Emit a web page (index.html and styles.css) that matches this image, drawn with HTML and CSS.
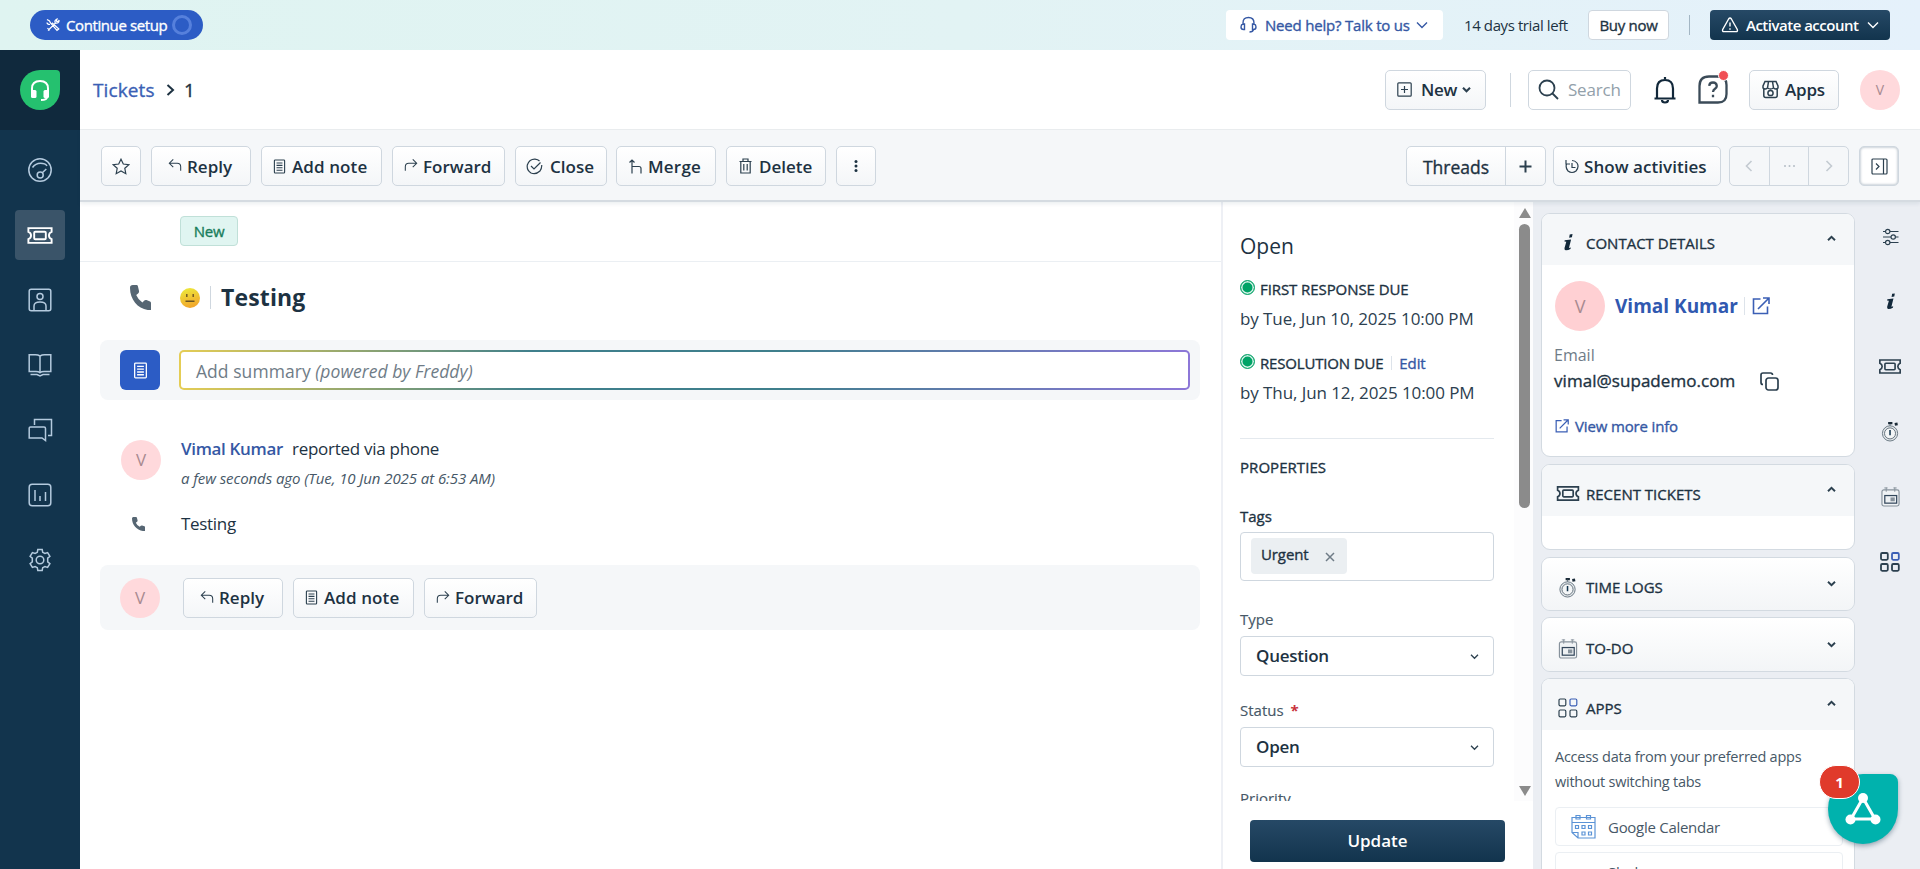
FILE: index.html
```html
<!DOCTYPE html>
<html lang="en">
<head>
<meta charset="utf-8">
<title>Ticket 1</title>
<link rel="stylesheet" href="styles.css">
</head>
<body>
<svg class="sprite" width="0" height="0">
  <symbol id="reply" viewBox="0 0 16 16"><path d="M6 1.500 1.500 6 6 10.500M1.500 6H10.500Q14.500 6 14.500 10V14.500"/></symbol>
  <symbol id="forward" viewBox="0 0 16 16"><path d="M10 1.500 14.500 6 10 10.500M14.500 6H5.500Q1.500 6 1.500 10V14.500"/></symbol>
  <symbol id="note" viewBox="0 0 14 16"><rect x="1.500" y="1" width="11" height="14" rx="0.800"/><path d="M3.800 4.200H10.200M3.800 6.800H10.200M3.800 9.400H10.200M3.800 12H10.200"/></symbol>
  <symbol id="phone" viewBox="0 0 22 26"><path d="M0 3C0 1 1 0 3 0H7Q8 0 8.300 1.200L9.500 6.500Q9.600 8 8.500 8.700L6.500 10.500Q8.500 15.500 13 18.300L15 16.200Q16 15.300 17.200 15.700L21 17.200Q22 17.600 22 18.800V26H18.500C8 24.500 0 15 0 3Z"/></symbol>
  <symbol id="ticket" viewBox="0 0 26 18"><path d="M2 2H24V5.500Q21.500 6.500 21.500 9T24 12.500V16H2V12.500Q4.500 11.500 4.500 9T2 5.500Z"/><rect x="7.500" y="5.500" width="11" height="7" rx="1"/></symbol>
  <symbol id="up" viewBox="0 0 10 8"><path d="M1 6 5 2 9 6"/></symbol>
  <symbol id="down" viewBox="0 0 10 8"><path d="M1 2 5 6 9 2"/></symbol>
  <symbol id="watch" viewBox="0 0 20 22"><circle cx="9.500" cy="13" r="8" fill="#e3e7ea" stroke="#687782" stroke-width="1"/><circle cx="9.500" cy="13" r="5.800" fill="#f4f6f7" stroke="#55636f" stroke-width=".9"/><path d="M9.500 9.500V15" stroke="#12344d" stroke-width="1.600"/><path d="M7.500 2.200H12" stroke="#1b2b38" stroke-width="2.400"/><path d="M14.500 3.500 17.500 3" stroke="#1b2b38" stroke-width="3"/><path d="M9.500 3V5" stroke="#687782"/></symbol>
  <symbol id="cal" viewBox="0 0 20 22"><rect x="1" y="4" width="18" height="17" rx="2" fill="#f0f3f5" stroke="#87929c"/><path d="M5.500 1.500V6M14.500 1.500V6M3.500 2H7M13 2H16.500" stroke="#87929c" stroke-width="1"/><rect x="4" y="10" width="12.500" height="8" fill="#eef1f3" stroke="#33475b" stroke-width="1.300"/><rect x="10" y="12" width="4.500" height="4" fill="#87929c" stroke="none"/></symbol>
  <symbol id="grid" viewBox="0 0 20 20"><rect x="1" y="1" width="6.800" height="6.800" rx="1.200"/><rect x="12" y="1" width="6.800" height="6.800" rx="1.200" stroke="#3b5fb5"/><rect x="1" y="12" width="6.800" height="6.800" rx="1.200"/><rect x="12" y="12" width="6.800" height="6.800" rx="1.200"/></symbol>
  <symbol id="ext" viewBox="0 0 18 18"><path d="M8.500 2H1.500V16.500H15.500V9.500M11 1H17V7M17 1 6 12"/></symbol>
  <symbol id="info" viewBox="0 0 10 18"><path d="M6.800 0.500 9.800 0 9.200 3.400 6.200 3.900ZM1.500 6.500 8.300 5.800 6 14.700 8 14.200 7.600 16Q5 17.500 2.500 17.300.8 16.800 1.300 14.800L3.200 8.200 1.200 8Z"/></symbol>
</svg>

<header class="trial">
  <div class="setup">
    <svg width="14" height="14" viewBox="0 0 14 14"><path d="M2 12.500 9.500 5M9.300 5Q8 2.500 11 1L10.500 3.300 12.500 3.500 13 2Q13.500 5.500 9.500 5M1 1.500 3.500 3 4.500 5 11 12.500 12.800 11 6 4.700M1 4.500Q1 6.500 4 6.500M1.500 10 3.500 12.500"/></svg>
    <span class="t-setup">Continue setup</span><i class="ring"></i>
  </div>
  <div class="help">
    <svg width="17" height="18" viewBox="0 0 17 18"><path d="M3 9V7Q3 1.500 8.500 1.500T14 7V9M3 8Q1 8.500 1 11T3.500 13.500H4.500V8ZM14 8Q16 8.500 16 11T13.500 13.500H12.500V8ZM13.500 13.500Q13 16 9.500 16"/></svg>
    <span class="t-help">Need help? Talk to us</span>
    <svg class="chev" width="12" height="8" viewBox="0 0 12 8"><path d="M1 1.500 6 6.500 11 1.500"/></svg>
  </div>
  <span class="left t-trial">14 days trial left</span>
  <div class="buy"><span class="t-buy">Buy now</span></div>
  <i class="vline"></i>
  <div class="activate">
    <svg width="18" height="16" viewBox="0 0 18 16"><path d="M7.600 2Q9 0 10.400 2L16.300 12.500Q17 14.600 15 14.600H3Q1 14.600 1.700 12.500ZM9 5.500V9.500M9 11.200V12.700"/></svg>
    <span class="t-act">Activate account</span>
    <svg class="chev" width="12" height="8" viewBox="0 0 12 8"><path d="M1 1.500 6 6.500 11 1.500"/></svg>
  </div>
</header>

<div class="shell">
  <nav class="side">
    <div class="logo-box"><div class="logo"><svg class="headset" width="20" height="24" viewBox="0 0 20 24"><path d="M2 14V10.500Q2 3 10 3T18 10.500V14M17 19Q17 22 11 22" fill="none" stroke="#fff" stroke-width="2"/><rect x="1" y="12" width="5.500" height="8" rx="1.500" fill="#fff"/><rect x="13.500" y="12" width="5.500" height="8" rx="1.500" fill="#fff"/></svg></div></div>
    <div class="nav-item"><svg width="26" height="26" viewBox="0 0 26 26"><circle cx="13" cy="13" r="11.200"/><path d="M5.500 10.500Q8.500 6.300 13.500 6.300T20 9M15.300 15.800 19.300 12"/><circle cx="13.200" cy="18" r="3"/></svg></div>
    <div class="nav-item on"><svg width="28" height="19"><use href="#ticket"/></svg></div>
    <div class="nav-item"><svg width="24" height="24" viewBox="0 0 24 24"><rect x="1.200" y="1.200" width="21.600" height="21.600" rx="2"/><circle cx="12" cy="8.500" r="3"/><path d="M6 22.500V18Q6 14 12 14T18 18V22.500"/></svg></div>
    <div class="nav-item"><svg width="24" height="24" viewBox="0 0 24 24"><path d="M12 3Q10 1.800 7.500 1.800H1.200V18.500H8Q10.500 18.500 12 19.800 13.500 18.500 16 18.500H22.800V1.800H16.500Q14 1.800 12 3V19.500M2.500 21.500H9L12 23 15 21.500H21.500"/></svg></div>
    <div class="nav-item"><svg width="25" height="24" viewBox="0 0 25 24"><path d="M6.500 7V1.500H23.500V17.500H20M1.200 10Q1.200 9 2.500 9H16Q17.500 9 17.500 10.500V22.500L14 20H1.200Z"/></svg></div>
    <div class="nav-item"><svg width="24" height="24" viewBox="0 0 24 24"><rect x="1.200" y="1.200" width="21.600" height="21.600" rx="3"/><path d="M7 7V18M12 13V18M17.500 9V18"/></svg></div>
    <div class="nav-item"><svg width="24" height="24" viewBox="0 0 24 24"><path d="M9.300 4.300 9.800 1.500H14.200L14.700 4.300 16.900 5.500 19.600 4.600 21.900 8.400 19.700 10.200V13.800L21.900 15.600 19.600 19.400 16.900 18.500 14.700 19.700 14.200 22.500H9.800L9.300 19.700 7.100 18.500 4.400 19.400 2.100 15.600 4.300 13.800V10.200L2.100 8.400 4.400 4.600 7.100 5.500Z"/><circle cx="12" cy="12" r="3.800"/></svg></div>
  </nav>

  <div class="body">
    <div class="head">
      <span class="crumb t-crumb">Tickets</span>
      <svg class="sep" width="9" height="12" viewBox="0 0 9 12"><path d="M1.500 1 7 6 1.500 11"/></svg>
      <span class="num">1</span>
      <div class="btn new"><svg width="15" height="15" viewBox="0 0 15 15"><rect x=".8" y=".8" width="13.400" height="13.400" rx="1"/><path d="M4 7.500H11M7.500 4V11"/></svg><span class="t-new">New</span><svg class="bold" width="9" height="7"><use href="#down"/></svg></div>
      <i class="vline2"></i>
      <div class="search"><svg width="21" height="21" viewBox="0 0 21 21"><circle cx="9" cy="9" r="7.500"/><path d="M14.500 14.500 20 20"/></svg><span class="t-search">Search</span></div>
      <svg class="bell" width="24" height="28" viewBox="0 0 24 28"><path d="M12 1V3M1.500 22.500H22.500M4 22V12.500Q4 4 12 4T20 12.500V22M9 24Q9 26.500 12 26.500T15 24"/></svg>
      <div class="ask"><svg width="30" height="29" viewBox="0 0 30 29"><path d="M19 1.500H11Q1.500 1.500 1.500 11V27.500H20Q28.500 27.500 28.500 19V10Q28.500 1.500 19 1.500Z"/><path d="M11.200 10.800Q11.500 7.500 15 7.500T18.800 11Q18.800 12.500 17 13.700T15 17M15 19.800V22.300"/></svg><b class="dot"></b></div>
      <div class="btn apps"><svg width="17" height="19" viewBox="0 0 17 19"><path d="M3 1.500H14L16 6V8Q14 10 11.500 8 8.500 10 5.500 8 3 10 1 8V6ZM5.500 8 6.500 1.500M11.500 8 10.500 1.500M1.800 9V15.500Q1.800 17.500 3.800 17.500H13.200Q15.200 17.500 15.200 15.500V9"/><circle cx="8.500" cy="13" r="2.600"/></svg><span class="t-apps">Apps</span></div>
      <div class="avatar a40 me">V</div>
    </div>

    <div class="tools">
      <div class="btn w40"><svg width="18" height="17" viewBox="0 0 18 17"><path d="M9 1.200 11.300 6 16.800 6.700 12.800 10.300 13.800 15.700 9 13 4.200 15.700 5.200 10.300 1.200 6.700 6.700 6Z"/></svg></div>
      <div class="btn b-reply"><svg width="14" height="14"><use href="#reply"/></svg><span class="t-reply">Reply</span></div>
      <div class="btn b-note"><svg width="13" height="15"><use href="#note"/></svg><span class="t-note">Add note</span></div>
      <div class="btn b-fwd"><svg width="14" height="14"><use href="#forward"/></svg><span class="t-fwd">Forward</span></div>
      <div class="btn b-close"><svg width="17" height="17" viewBox="0 0 17 17"><path d="M15.700 7Q16 10 14 13 10 16.800 5 15 .5 12 1.300 7 3.500 1 9 1.200 12 1.500 13.500 3M5 8 8 11 14.500 4.500"/></svg><span class="t-close">Close</span></div>
      <div class="btn b-merge"><svg width="13" height="15" viewBox="0 0 13 15"><path d="M3 14.500V1M.5 3.500 3 1 5.500 3.500M3 7.500H10Q12 7.500 12 9.500V14.500"/></svg><span class="t-merge">Merge</span></div>
      <div class="btn b-del"><svg width="13" height="16" viewBox="0 0 13 16"><path d="M.5 3.500H12.500M4 3.500V1H9V3.500M1.800 3.500V15H11.200V3.500M4.800 6V12.500M8.200 6V12.500"/></svg><span class="t-del">Delete</span></div>
      <div class="btn w40"><svg width="4" height="14" viewBox="0 0 4 14" class="dots"><circle cx="2" cy="2.500" r="1.500"/><circle cx="2" cy="7" r="1.500"/><circle cx="2" cy="11.500" r="1.500"/></svg></div>
      <div class="btn-group threads"><div class="seg s-th"><span class="t-th">Threads</span></div><div class="seg s-plus"><svg width="13" height="13" viewBox="0 0 13 13"><path d="M6.500.5V12.500M.5 6.500H12.500"/></svg></div></div>
      <div class="btn b-act"><svg width="14" height="15" viewBox="0 0 14 15"><path d="M1 1V5H5M1.500 5Q.3 9 3 12 7 15 11 12 14.500 8 12 4"/><path d="M7 4V8.500H10.500M7 1.500Q10 1.500 12 4"/></svg><span class="t-sh">Show activities</span></div>
      <div class="btn-group pager"><div class="seg"><svg width="8" height="12" viewBox="0 0 8 12"><path d="M6.500 1 1.500 6 6.500 11"/></svg></div><div class="seg"><svg width="13" height="4" viewBox="0 0 13 4" class="pdots"><circle cx="2" cy="2" r="1"/><circle cx="6.500" cy="2" r="1"/><circle cx="11" cy="2" r="1"/></svg></div><div class="seg"><svg width="8" height="12" viewBox="0 0 8 12"><path d="M1.500 1 6.500 6 1.500 11"/></svg></div></div>
      <div class="btn w40 toggle"><svg width="17" height="17" viewBox="0 0 17 17"><rect x="1" y="1" width="15" height="15" rx="1"/><path d="M12.500 1V16M5 5.500 8 8.500 5 11.500"/></svg></div>
    </div>

    <div class="content">
      <main class="convo">
        <div class="status-row"><span class="badge"><span class="t-badge">New</span></span></div>
        <div class="subject">
          <svg class="ph" width="21" height="25"><use href="#phone"/></svg>
          <svg class="face" width="20" height="20" viewBox="0 0 20 20"><defs><linearGradient id="fg" x1="0" y1="0" x2=".3" y2="1"><stop offset="0" stop-color="#ecee3c"/><stop offset="1" stop-color="#f2a92c"/></linearGradient></defs><circle cx="10" cy="10" r="10" fill="url(#fg)"/><path d="M6.800 6V9M13.200 6V9M5.500 13.200H14.500" stroke="#6b5323" stroke-width="1.400"/></svg>
          <i class="vline3"></i>
          <h1 class="t-title">Testing</h1>
        </div>
        <div class="summary">
          <div class="sum-btn"><svg width="15" height="17"><use href="#note"/></svg></div>
          <div class="sum-input"><span class="t-sum">Add summary <em>(powered by Freddy)</em></span></div>
        </div>
        <div class="event">
          <div class="avatar a40">V</div>
          <div class="event-text">
            <div class="line1"><b class="t-vk">Vimal Kumar</b><span class="t-rep">reported via phone</span></div>
            <em class="t-ago">a few seconds ago (Tue, 10 Jun 2025 at 6:53 AM)</em>
          </div>
        </div>
        <div class="msg"><svg class="ph" width="13" height="14" viewBox="0 0 22 26" preserveAspectRatio="none"><use href="#phone" width="22" height="26"/></svg><span class="t-msg">Testing</span></div>
        <div class="respond">
          <div class="avatar a40">V</div>
          <div class="btn b-reply"><svg width="14" height="14"><use href="#reply"/></svg><span class="t-reply">Reply</span></div>
          <div class="btn b-note"><svg width="13" height="15"><use href="#note"/></svg><span class="t-note">Add note</span></div>
          <div class="btn b-fwd"><svg width="14" height="14"><use href="#forward"/></svg><span class="t-fwd">Forward</span></div>
        </div>
      </main>

      <aside class="props">
        <div class="scroll">
          <div class="fields">
            <div class="state"><span class="t-open">Open</span></div>
            <div class="due"><i class="green"></i><span class="t-frd">FIRST RESPONSE DUE</span></div>
            <div class="by"><span class="t-by1">by Tue, Jun 10, 2025 10:00 PM</span></div>
            <div class="due second"><i class="green"></i><span class="t-rd">RESOLUTION DUE</span><i class="vline4"></i><span class="edit t-edit">Edit</span></div>
            <div class="by by2"><span class="t-by2">by Thu, Jun 12, 2025 10:00 PM</span></div>
            <div class="ptitle"><span class="t-props">PROPERTIES</span></div>
            <label class="lab dark"><span class="t-tags">Tags</span></label>
            <div class="tagbox"><div class="chip"><span class="t-urg">Urgent</span><svg width="10" height="10" viewBox="0 0 10 10"><path d="M1 1 9 9M9 1 1 9"/></svg></div></div>
            <label class="lab l2"><span class="t-type">Type</span></label>
            <div class="select"><span class="t-q">Question</span><svg width="9" height="7"><use href="#down"/></svg></div>
            <label class="lab l3"><span class="t-stat">Status</span><b class="req">*</b></label>
            <div class="select"><span class="t-o">Open</span><svg width="9" height="7"><use href="#down"/></svg></div>
            <label class="lab l4"><span class="t-pri">Priority</span></label>
          </div>
          <div class="bar"><i class="arr-up"></i><i class="thumb"></i><i class="arr-down"></i></div>
        </div>
        <div class="update"><span class="t-upd">Update</span></div>
      </aside>

      <aside class="widgets">
        <div class="cards">
          <section class="card contact">
            <div class="chead"><svg class="solid" width="9" height="17"><use href="#info"/></svg><span class="t-cd">CONTACT DETAILS</span><svg class="cv" width="9" height="7"><use href="#up"/></svg></div>
            <div class="person"><div class="avatar a50">V</div><b class="t-name">Vimal Kumar</b><i class="vline5"></i><svg width="18" height="18"><use href="#ext"/></svg></div>
            <div class="elabel"><span class="t-el">Email</span></div>
            <div class="email"><span class="t-em">vimal@supademo.com</span><svg width="19" height="19" viewBox="0 0 19 19"><rect x="6" y="6" width="12" height="12" rx="2.500"/><path d="M3 12.500Q1 12.500 1 10.500V3Q1 1 3 1H10.500Q12.500 1 12.500 3"/></svg></div>
            <div class="more"><svg width="14" height="14"><use href="#ext"/></svg><span class="t-more">View more info</span></div>
          </section>
          <section class="card recent"><div class="chead"><svg class="wide" width="24" height="17"><use href="#ticket"/></svg><span class="t-rt">RECENT TICKETS</span><svg class="cv" width="9" height="7"><use href="#up"/></svg></div></section>
          <section class="card folded tl"><div class="chead"><svg width="19" height="21"><use href="#watch"/></svg><span class="t-tl">TIME LOGS</span><svg class="cv" width="9" height="7"><use href="#down"/></svg></div></section>
          <section class="card folded td"><div class="chead"><svg width="19" height="21"><use href="#cal"/></svg><span class="t-td">TO-DO</span><svg class="cv" width="9" height="7"><use href="#down"/></svg></div></section>
          <section class="card appcard">
            <div class="chead"><svg width="20" height="20"><use href="#grid"/></svg><span class="t-ap">APPS</span><svg class="cv" width="9" height="7"><use href="#up"/></svg></div>
            <p class="desc"><span class="t-d1">Access data from your preferred apps</span><br><span class="t-d2">without switching tabs</span></p>
            <div class="app"><svg width="25" height="25" viewBox="0 0 25 25"><path d="M1 3.500H24V24H7L1 18.500ZM1 8.500H24M1 18.500H7V24"/><path d="M5 1.500H9V5H5ZM15.500 1.500H19.500V5H15.500ZM4.500 11.500H7.500V14.500H4.500ZM11 11.500H14V14.500H11ZM17.500 11.500H20.500V14.500H17.500ZM11 18H14V21H11ZM17.500 18H20.500V21H17.500Z"/></svg><span class="t-g">Google Calendar</span></div>
            <div class="app slack"><span class="t-s">Slack</span></div>
          </section>
        </div>
        <div class="rail">
          <div><svg width="17" height="18" viewBox="0 0 17 18"><path d="M1 3.500H3.500M8 3.500H16.500M1 9H9M13.500 9H16.500M1 14.500H3.500M8 14.500H16.500"/><circle cx="5.700" cy="3.500" r="2.200"/><circle cx="11.200" cy="9" r="2.200"/><circle cx="5.700" cy="14.500" r="2.200"/></svg></div>
          <div><svg class="solid" width="9" height="17"><use href="#info"/></svg></div>
          <div><svg class="heavy" width="24" height="17"><use href="#ticket"/></svg></div>
          <div><svg width="19" height="21"><use href="#watch"/></svg></div>
          <div><svg width="19" height="21"><use href="#cal"/></svg></div>
          <div><svg class="heavy" width="20" height="20"><use href="#grid"/></svg></div>
        </div>
      </aside>
    </div>
  </div>
</div>

<div class="float"><svg class="nodes" width="36" height="34" viewBox="0 0 36 34"><path d="M18 6 6 27H30Z" fill="none" stroke="#fff" stroke-width="3"/><circle cx="18" cy="6" r="5" fill="#fff"/><circle cx="5.500" cy="27.500" r="5" fill="#fff"/><circle cx="30.500" cy="27.500" r="5" fill="#fff"/></svg><b class="count">1</b></div>
</body>
</html>
```
FILE: styles.css
```css
* { box-sizing: border-box; }
body { margin: 0; height: 869px; overflow: hidden; background: #fff; font: 17px/24px "Open Sans", "Noto Sans", sans-serif; color: #1d3242; position: relative; }
svg { display: block; flex: none; fill: none; stroke: #2c404f; stroke-width: 1.2; }
.sprite { position: absolute; }
span, b, em { white-space: nowrap; }
i { display: block; flex: none; }

/* medium weight, between regular and semibold */
.t-setup, .t-help, .t-buy, .t-crumb, .num, .t-badge, .t-th, .t-frd, .t-rd, .t-edit, .t-props, .t-tags, .t-urg, .t-em, .t-more, .chead span { -webkit-text-stroke: .35px currentColor; }
.t-type, .t-stat, .t-pri { -webkit-text-stroke: .15px currentColor; }

.trial { height: 50px; display: flex; align-items: center; background: linear-gradient(90deg, #dff4f1 0%, #e2f3f4 50%, #e5f1fb 100%); padding: 0 30px; font-size: 15px; }
.setup { width: 173px; height: 30px; border-radius: 15px; background: #2c5cc5; color: #fff; display: flex; align-items: center; padding-left: 16px; }
.setup svg { stroke: #fff; }
.setup .t-setup { width: 106px; margin-left: 6px; letter-spacing: -.4px; }
.ring { width: 20px; height: 20px; border: 3px solid #5680dc; border-radius: 50%; }
.help { margin-left: auto; width: 217px; height: 30px; border-radius: 4px; background: #fff; display: flex; align-items: center; padding-left: 14px; color: #3558a4; }
.help svg { stroke: #3558a4; stroke-width: 1.4; }
.help .t-help { margin-left: 8px; width: 151px; letter-spacing: -.2px; }
.left { margin-left: 21px; width: 124px; letter-spacing: -.4px; }
.buy { width: 81px; height: 30px; border: 1px solid #cfd7df; border-radius: 4px; background: #fff; display: flex; align-items: center; justify-content: center; letter-spacing: -.3px; }
.vline { width: 1px; height: 20px; background: #a3b6c4; margin: 0 20px; }
.activate { width: 180px; height: 30px; border-radius: 4px; background: linear-gradient(#264966, #12344d); color: #fff; display: flex; align-items: center; padding-left: 11px; font-weight: 600; }
.activate svg { stroke: #fff; stroke-width: 1.4; }
.t-act { margin-left: 7px; width: 121px; letter-spacing: -.5px; }

.shell { display: flex; height: 819px; }
.side { width: 80px; background: #12344d; flex: none; }
.logo-box { height: 80px; background: #10293d; display: grid; place-items: center; margin-bottom: 15px; }
.logo { width: 40px; height: 40px; background: #25c16f; border-radius: 50% 4px 50% 50%; display: grid; place-items: center; }
.headset, .nodes { stroke: none; }
.nav-item { width: 50px; height: 50px; margin: 0 auto 15px 15px; border-radius: 4px; display: grid; place-items: center; }
.nav-item svg { stroke: #b4cade; stroke-width: 1.5; }
.nav-item.on { background: #3a5469; }
.nav-item.on svg { stroke: #fff; stroke-width: 1.8; }

.body { flex: 1; min-width: 0; }
.head { height: 80px; display: flex; align-items: center; padding: 0 20px 0 13px; font-size: 19px; border-bottom: 1px solid #ebeef0; }
.crumb { color: #3b5fb5; width: 62px; }
.t-crumb { letter-spacing: .1px; padding-top: 1px; }
.sep { margin: 1px 0 0 11px; stroke: #1d3242; stroke-width: 2; }
.num { margin-left: 9px; padding-top: 1px; }
.btn { height: 40px; border: 1px solid #cfd7df; border-radius: 5px; background: linear-gradient(#fff, #f4f6f8); display: flex; align-items: center; font-weight: 600; flex: none; font-size: 17px; }
.new { margin-left: auto; width: 101px; padding-left: 11px; }
.t-new { margin-left: 9px; width: 37px; margin-right: 4px; letter-spacing: -.3px; }
.bold { stroke-width: 2.4; }
.vline2 { width: 1px; height: 34px; background: #cfd7df; margin: 0 17px 0 24px; }
.search { width: 103px; height: 40px; border: 1px solid #cfd7df; border-radius: 5px; display: flex; align-items: center; padding-left: 9px; color: #92a0aa; font-size: 17px; }
.search svg { stroke-width: 1.8; }
.t-search { margin-left: 9px; letter-spacing: -.2px; }
.bell { margin-left: 22px; stroke-width: 2.2; stroke: #12283a; }
.ask { margin-left: 21px; position: relative; }
.ask svg { stroke-width: 2.3; stroke: #3b4b58; }
.dot { position: absolute; right: -1px; top: -5px; width: 11px; height: 11px; border: 1px solid #fff; border-radius: 50%; background: #f04f55; }
.apps { margin-left: 21px; width: 90px; padding-left: 12px; }
.apps svg { stroke-width: 1.5; }
.t-apps { margin-left: 6px; letter-spacing: -.2px; }
.avatar { border-radius: 50%; background: #ffd9dc; color: #a88a90; display: grid; place-items: center; flex: none; font-size: 17px; }
.a40 { width: 40px; height: 40px; }
.a50 { width: 50px; height: 50px; background: #ffd0d3; font-size: 18px; }
.me { margin-left: 21px; font-size: 14px; }

.tools { height: 72px; background: #f5f7f9; border-bottom: 2px solid #d5dbe1; display: flex; align-items: center; padding: 2px 21px 0; position: relative; box-shadow: 0 2px 4px rgba(18, 52, 77, .08); }
.tools span, .respond span { padding-top: 1px; }
.w40 { width: 40px; justify-content: center; }
.tools > .btn + .btn { margin-left: 10px; }
.tools > .btn + .b-merge { margin-left: 9px; }
.tools > .btn + .btn.toggle, .tools > .toggle { margin-left: 10px; background: #fff; box-shadow: 0 0 3px #9aa8b5 inset; }
.b-reply { width: 100px; padding-left: 16px; }
.b-reply svg, .b-fwd svg { position: relative; top: -1px; }
.t-reply { margin-left: 5px; }
.b-note { width: 121px; padding-left: 11px; }
.t-note { margin-left: 6px; letter-spacing: .1px; }
.b-fwd { width: 113px; padding-left: 11px; }
.t-fwd { margin-left: 5px; }
.b-close { width: 92px; padding-left: 10px; }
.t-close { margin-left: 7px; }
.b-merge { width: 100px; padding-left: 12px; }
.t-merge { margin-left: 6px; letter-spacing: .2px; }
.b-del { width: 100px; padding-left: 12px; }
.t-del { margin-left: 7px; }
.dots, .pdots { fill: #1d3242; stroke: none; }
.btn-group { display: flex; height: 40px; border: 1px solid #cfd7df; border-radius: 5px; background: linear-gradient(#fff, #f4f6f8); }
.threads { margin-left: auto; width: 140px; }
.seg { display: grid; place-items: center; border-left: 1px solid #cfd7df; }
.seg:first-child { border-left: 0; }
.s-th { width: 98px; font-size: 17.500px; }
.s-plus { flex: 1; }
.s-plus svg { stroke-width: 2; }
.b-act { margin-left: 7px; width: 168px; padding-left: 11px; }
.t-sh { margin-left: 5px; letter-spacing: .05px; }
.pager { margin-left: 8px; width: 120px; background: #f5f7f9; }
.pager .seg { flex: 1; }
.pager svg { stroke: #c3cad1; stroke-width: 1.6; }
.pager .pdots { fill: #b5bec6; stroke: none; }

.content { display: flex; height: 667px; }
.convo { width: 1141px; flex: none; }
.status-row { height: 60px; border-bottom: 1px solid #ebeff3; padding: 14px 0 0 100px; }
.badge { display: grid; place-items: center; width: 58px; height: 30px; border: 1px solid #c0e0d8; border-radius: 4px; background: #e0f5f1; color: #187d5b; font-size: 15px; letter-spacing: -.2px; }
.subject { height: 78px; display: flex; align-items: center; padding: 0 0 8px 50px; }
.ph { fill: #566673; stroke: none; }
.face { stroke: none; margin: 2px 0 0 29px; }
.vline3 { width: 1px; height: 23px; background: #cfd7df; margin: 0 10px 0 10px; }
h1 { margin: 0; font-size: 23px; line-height: 30px; font-weight: 700; letter-spacing: .15px; }
.summary { margin-left: 20px; width: 1100px; height: 60px; margin-bottom: -2px; border-radius: 8px; background: #f5f7f9; display: flex; align-items: center; padding-left: 20px; }
.sum-btn { width: 40px; height: 40px; border-radius: 6px; background: #2c5cc5; display: grid; place-items: center; }
.sum-btn svg { stroke: #fff; }
.sum-input { margin-left: 19px; width: 1011px; height: 40px; border: 2px solid transparent; border-radius: 5px; background: linear-gradient(#fff, #fff) padding-box, linear-gradient(90deg, #e5cd55 0%, #3f7f8c 35%, #3f7f8c 60%, #8d77d8 100%) border-box; padding: 7px 15px; color: #6f7c87; font-size: 17.500px; letter-spacing: .05px; }
.event { display: flex; margin: 37px 0 0 41px; height: 80px; padding-top: 5px; }
.event-text { margin: -3px 0 0 20px; }
.line1 { height: 25px; display: flex; gap: 9px; }
.line1 b { color: #3558a4; font-weight: 600; letter-spacing: -.33px; }
.t-rep { letter-spacing: -.28px; }
.t-ago { display: block; margin-top: 4px; font-size: 15px; color: #475867; letter-spacing: -.08px; }
.msg { height: 24px; display: flex; align-items: center; padding-left: 52px; margin-top: -3px; }
.t-msg { margin-left: 36px; letter-spacing: -.3px; }
.respond { margin: 29px 0 0 20px; width: 1100px; height: 65px; border-radius: 8px; background: #f5f7f9; display: flex; align-items: center; padding-left: 20px; gap: 10px; }
.respond .avatar { margin-right: 13px; }

.props { width: 312px; flex: none; border-left: 2px solid #eef0f5; }
.scroll { display: flex; height: 599px; overflow: hidden; }
.fields { width: 289px; padding: 0 16px 0 17px; }
.fields > * { width: 254px; }
.state { margin-top: 29px; font-size: 21px; line-height: 30px; height: 30px; }
.due { height: 24px; margin-top: 16px; display: flex; align-items: center; font-size: 15px; }
.t-frd { letter-spacing: -.08px; }
.by { height: 24px; margin-top: 6px; color: #2c404f; letter-spacing: -.085px; }
.green { width: 15px; height: 15px; border-radius: 50%; border: 1px solid #16a771; background: #00a366; box-shadow: inset 0 0 0 1.5px #d9f3ea; margin-right: 5px; margin-top: -3px; }
.second { margin-top: 20px; }
.t-rd { letter-spacing: -.17px; }
.vline4 { width: 1px; height: 14px; background: #dde3ea; margin: 0 7px 0 8px; }
.edit { color: #3558a4; letter-spacing: -.1px; }
.by2 { margin-top: 6px; }
.ptitle { margin-top: 33px; border-top: 1px solid #e4e9ee; height: 45px; padding-top: 16px; font-size: 15px; letter-spacing: .05px; }
.lab { display: flex; height: 24px; margin-top: 21px; font-size: 15px; color: #475867; }
.dark { color: #1d3242; }
.tagbox { margin-top: 4px; height: 49px; border: 1px solid #cfd7df; border-radius: 4px; padding: 5px 10px; }
.chip { width: 96px; height: 36px; border-radius: 4px; background: #ebeff2; display: flex; align-items: center; padding-left: 10px; font-size: 15px; }
.chip span { width: 48px; margin: -4px 16px 0 0; letter-spacing: -.1px; }
.chip svg { stroke: #6f7c87; stroke-width: 1.5; margin-top: 2px; }
.l2 { margin-top: 26px; }
.select { margin-top: 5px; height: 40px; border: 1px solid #cfd7df; border-radius: 4px; display: flex; align-items: center; justify-content: space-between; padding: 0 14px 0 15px; font-weight: 600; letter-spacing: -.25px; }
.select svg { stroke-width: 1.5; }
.l3 { margin-top: 22px; }
.l4 { margin-top: 19px; }
.req { color: #c8323c; margin-left: 7px; }
.bar { width: 21px; display: flex; flex-direction: column; align-items: center; padding: 6px 0 5px; background: #fcfcfd; flex: none; margin-left: 2px; }
.fields { flex: none; }
.arr-up { border: 6px solid transparent; border-top: 0; border-bottom: 10px solid #8b8b8b; }
.thumb { width: 11px; height: 284px; border-radius: 6px; background: #8b8b8b; margin-top: 6px; }
.arr-down { border: 6px solid transparent; border-bottom: 0; border-top: 10px solid #8b8b8b; margin-top: auto; }
.update { margin: 19px 0 0 27px; width: 255px; height: 42px; border-radius: 4px; background: linear-gradient(#264966, #12344d); color: #fff; display: grid; place-items: center; font-weight: 600; }

.widgets { flex: 1; background: #ebeef3; display: flex; padding: 11px 0 0 8px; }
.cards { width: 314px; }
.card { border: 1px solid #d3dae1; border-radius: 9px; background: #fff; overflow: hidden; }
.chead { height: 51px; background: #f5f7f9; display: flex; align-items: center; padding: 6px 18px 0 13px; font-size: 15px; }
.chead > svg:first-child { width: 26px; margin-right: 5px; }
.chead .wide, .heavy { stroke-width: 1.8; }
.cv { margin: -8px 0 0 auto; stroke-width: 2.2; }
.solid { fill: #12283a; stroke: none; }
.contact { height: 244px; }
.person { height: 50px; margin: 16px 0 0 13px; display: flex; align-items: center; }
.person b { margin-left: 10px; color: #3058b0; font-size: 19px; }
.person svg, .more svg { stroke: #3b5fb5; stroke-width: 1.6; }
.vline5 { width: 1px; height: 18px; background: #dde3ea; margin: 0 7px 0 6px; }
.elabel { margin: 12px 0 0 12px; height: 24px; color: #6f7c87; font-size: 16px; }
.email { margin: 2px 0 0 12px; height: 24px; display: flex; align-items: center; letter-spacing: .05px; }
.email svg { margin-left: 25px; stroke-width: 1.7; }
.more { margin: 21px 0 0 13px; display: flex; align-items: center; gap: 6px; color: #3558a4; font-size: 15px; height: 24px; letter-spacing: -.15px; }
.recent { margin-top: 7px; height: 86px; }
.recent .chead { height: 51px; }
.folded { height: 54px; margin-top: 7px; }
.folded .chead { height: 52px; background: linear-gradient(#fff, #f3f5f7); }
.td { height: 55px; margin-top: 6px; }
.td .chead { height: 53px; padding-top: 7px; }
.appcard { margin-top: 6px; height: 192px; border-bottom: 0; border-radius: 9px 9px 0 0; }
.desc { margin: 14px 0 13px 13px; font-size: 14.500px; line-height: 25px; color: #475867; letter-spacing: -.25px; }
.app { margin: 0 11px 6px 13px; height: 39px; border: 1px solid #ebeff3; border-radius: 4px; display: flex; align-items: center; padding-left: 15px; font-size: 15px; color: #475867; letter-spacing: -.28px; }
.app svg { stroke: #5b93d6; stroke-width: 1.2; margin-right: 12px; }
.slack { padding-left: 52px; }
.rail { width: 70px; }
.rail div { height: 65px; display: grid; place-items: center; }
.rail div:first-child { margin-top: -9px; }

.float { position: absolute; left: 1828px; top: 774px; width: 70px; height: 70px; border-radius: 50% 8px 50% 50%; background: #00b2ad; box-shadow: 0 2px 5px rgba(18, 52, 77, .4); display: grid; place-items: center; }
.count { position: absolute; left: -9px; top: -9px; width: 41px; height: 34px; border-radius: 17px; border: 1px solid #fff; background: #e03a2b; color: #fff; display: grid; place-items: center; font-size: 15px; }
```
